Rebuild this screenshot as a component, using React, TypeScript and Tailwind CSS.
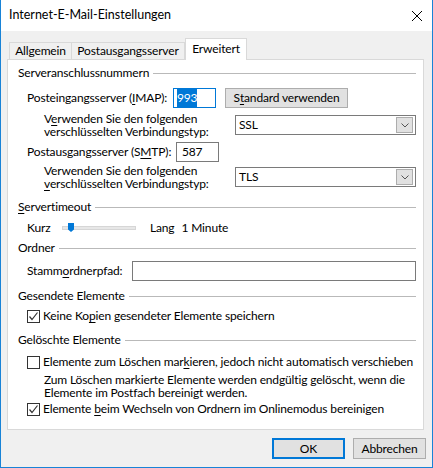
import React from "react";

const font = { fontFamily: 'Lato, "Noto Sans", "Liberation Sans", sans-serif' };

// letter with an access-key underline
const U = ({ children }: { children: React.ReactNode }) => <span className="underline underline-offset-2">{children}</span>;

const GroupHeader = ({ children }: { children: React.ReactNode }) => (
  <div className="flex h-4 items-center pr-[7px]">
    <span className="whitespace-nowrap pr-1">{children}</span>
    <div className="h-px flex-1 bg-[#b9b9b9]" />
  </div>
);

const Checkbox = ({ checked }: { checked?: boolean }) => (
  <div className="relative h-[13px] w-[13px] shrink-0 border border-[#333] bg-white">
    {checked && (
      <svg viewBox="0 0 11 11" className="absolute inset-0 h-[11px] w-[11px]">
        <polyline points="1.5,5.5 4,8.5 9.5,1.5" fill="none" stroke="#333" strokeWidth="1.2" />
      </svg>
    )}
  </div>
);

const Select = ({ value }: { value: string }) => (
  <div className="flex h-5 w-[181px] items-center border border-[#7a7a7a] bg-white pl-[3px] pr-[2px]">
    <span className="flex-1">{value}</span>
    <div className="flex h-[16px] w-[17px] items-center justify-center border border-[#adadad] bg-[#e1e1e1]">
      <svg viewBox="0 0 8 5" className="h-[5px] w-[8px]">
        <polyline points="0.5,0.5 4,4 7.5,0.5" fill="none" stroke="#555" strokeWidth="1" />
      </svg>
    </div>
  </div>
);

const EncryptionRow = ({ value, first }: { value: string; first?: boolean }) => (
  <div className="flex items-center">
    <div className="w-[217px] shrink-0 whitespace-nowrap pl-[26px] leading-[13px]">
      {first ? (
        <>
          V<U>e</U>rwenden Sie den folgenden
          <br />
          verschlüsselten Verbindungstyp:
        </>
      ) : (
        <>
          Verwenden Sie den folgenden
          <br />
          <U>v</U>erschlüsselten Verbindungstyp:
        </>
      )}
    </div>
    <Select value={value} />
  </div>
);

export default function App() {
  return (
    <div
      style={font}
      className="flex h-[468px] w-[433px] flex-col border-x border-b border-[#1883d7] bg-[#f0f0f0] text-[12px] tracking-[-0.15px] text-black"
    >
      {/* title bar */}
      <div className="flex h-[31px] shrink-0 items-center justify-between bg-white pl-2 pr-[10px]">
        <span className="text-[12.5px] tracking-normal">Internet-E-Mail-Einstellungen</span>
        <svg viewBox="0 0 10 10" className="h-[10px] w-[10px]">
          <path d="M0 0 L10 10 M10 0 L0 10" stroke="#000" strokeWidth="1" />
        </svg>
      </div>

      {/* tab strip */}
      <div className="relative z-10 mt-[7px] flex h-[21px] items-end whitespace-nowrap pl-2">
        <div className="flex h-[17px] w-[63px] items-center justify-center border border-b-0 border-[#d9d9d9] bg-[#f0f0f0]">
          Allgemein
        </div>
        <div className="flex h-[17px] w-[113px] items-center justify-center border border-b-0 border-l-0 border-[#d9d9d9] bg-[#f0f0f0]">
          Postausgangsserver
        </div>
        <div className="flex h-[22px] w-[62px] translate-y-px items-center justify-center border border-b-0 border-[#d9d9d9] bg-white pb-[2px]">
          Erweitert
        </div>
      </div>

      {/* tab page */}
      <div className="ml-[6px] flex h-[371px] w-[417px] flex-col whitespace-nowrap border border-[#d9d9d9] bg-white pl-[10px]">
        <div className="mt-[5px]">
          <GroupHeader>Serveranschlussnummern</GroupHeader>
        </div>

        <div className="mt-[7px] flex h-5 items-center">
          <span className="w-[155px] shrink-0 pl-[9px]">
            Posteingangsserver (<U>I</U>MAP):
          </span>
          <div className="flex h-5 w-[43px] items-center border border-[#0078d7] bg-white pl-[3px]">
            <span className="bg-[#0078d7] text-white">993</span>
          </div>
          <div className="ml-[9px] flex h-5 w-[123px] items-center justify-center border border-[#adadad] bg-[#e1e1e1]">
            S<U>t</U>andard verwenden
          </div>
        </div>

        <div className="mt-[4px]">
          <EncryptionRow value="SSL" first />
        </div>

        <div className="mt-[4px] flex h-5 items-center">
          <span className="w-[158px] shrink-0 pl-[9px]">
            Postausgangsserver (S<U>M</U>TP):
          </span>
          <div className="flex h-5 w-[43px] items-center border border-[#7a7a7a] bg-white pl-[5px]">587</div>
        </div>

        <div className="mt-[2px]">
          <EncryptionRow value="TLS" />
        </div>

        <div className="mt-[9px]">
          <GroupHeader>
            <U>S</U>ervertimeout
          </GroupHeader>
        </div>

        <div className="mt-[5px] flex h-4 items-center pl-[9px]">
          <span className="w-[35px]">Kurz</span>
          <div className="relative h-[4px] w-[74px] border border-[#d6d6d6] bg-[#e7e7e7]">
            <svg viewBox="0 0 6 9" className="absolute left-[5px] top-[-4px] h-[9px] w-[6px]">
              <path d="M0 0 H6 V6.5 L3 9 L0 6.5 Z" fill="#0078d7" />
            </svg>
          </div>
          <span className="ml-[14px]">Lang</span>
          <span className="ml-[7px]">1 Minute</span>
        </div>

        <div className="mt-[4px]">
          <GroupHeader>Ordner</GroupHeader>
        </div>

        <div className="mt-[5px] flex h-5 items-center">
          <span className="w-[114px] shrink-0 pl-[9px]">
            Stamm<U>o</U>rdnerpfad:
          </span>
          <div className="h-5 w-[284px] border border-[#7a7a7a] bg-white" />
        </div>

        <div className="mt-[7px]">
          <GroupHeader>Gesendete Elemente</GroupHeader>
        </div>

        <div className="mt-[4px] flex h-4 items-center gap-[3px] pl-[9px]">
          <Checkbox checked />
          <span>
            Keine Ko<U>p</U>ien gesendeter Elemente speichern
          </span>
        </div>

        <div className="mt-[8px]">
          <GroupHeader>Gelöschte Elemente</GroupHeader>
        </div>

        <div className="mt-[6px] flex h-4 items-center gap-[3px] pl-[9px]">
          <Checkbox />
          <span>
            Elemente zum Löschen mar<U>k</U>ieren, jedoch nicht automatisch verschieben
          </span>
        </div>

        <div className="mt-[3px] pl-[26px] leading-[13px]">
          Zum Löschen markierte Elemente werden endgültig gelöscht, wenn die
          <br />
          Elemente im Postfach bereinigt werden.
        </div>

        <div className="mt-[2px] flex h-4 items-center gap-[3px] pl-[9px]">
          <Checkbox checked />
          <span>
            Elemente <U>b</U>eim Wechseln von Ordnern im Onlinemodus bereinigen
          </span>
        </div>
      </div>

      {/* dialog buttons */}
      <div className="mt-2 flex justify-end gap-2 pr-[6px]">
        <div className="flex h-[21px] w-[73px] items-center justify-center border-2 border-[#0078d7] bg-[#e1e1e1]">OK</div>
        <div className="flex h-[21px] w-[73px] items-center justify-center border border-[#adadad] bg-[#e1e1e1]">
          Abbrechen
        </div>
      </div>
    </div>
  );
}
